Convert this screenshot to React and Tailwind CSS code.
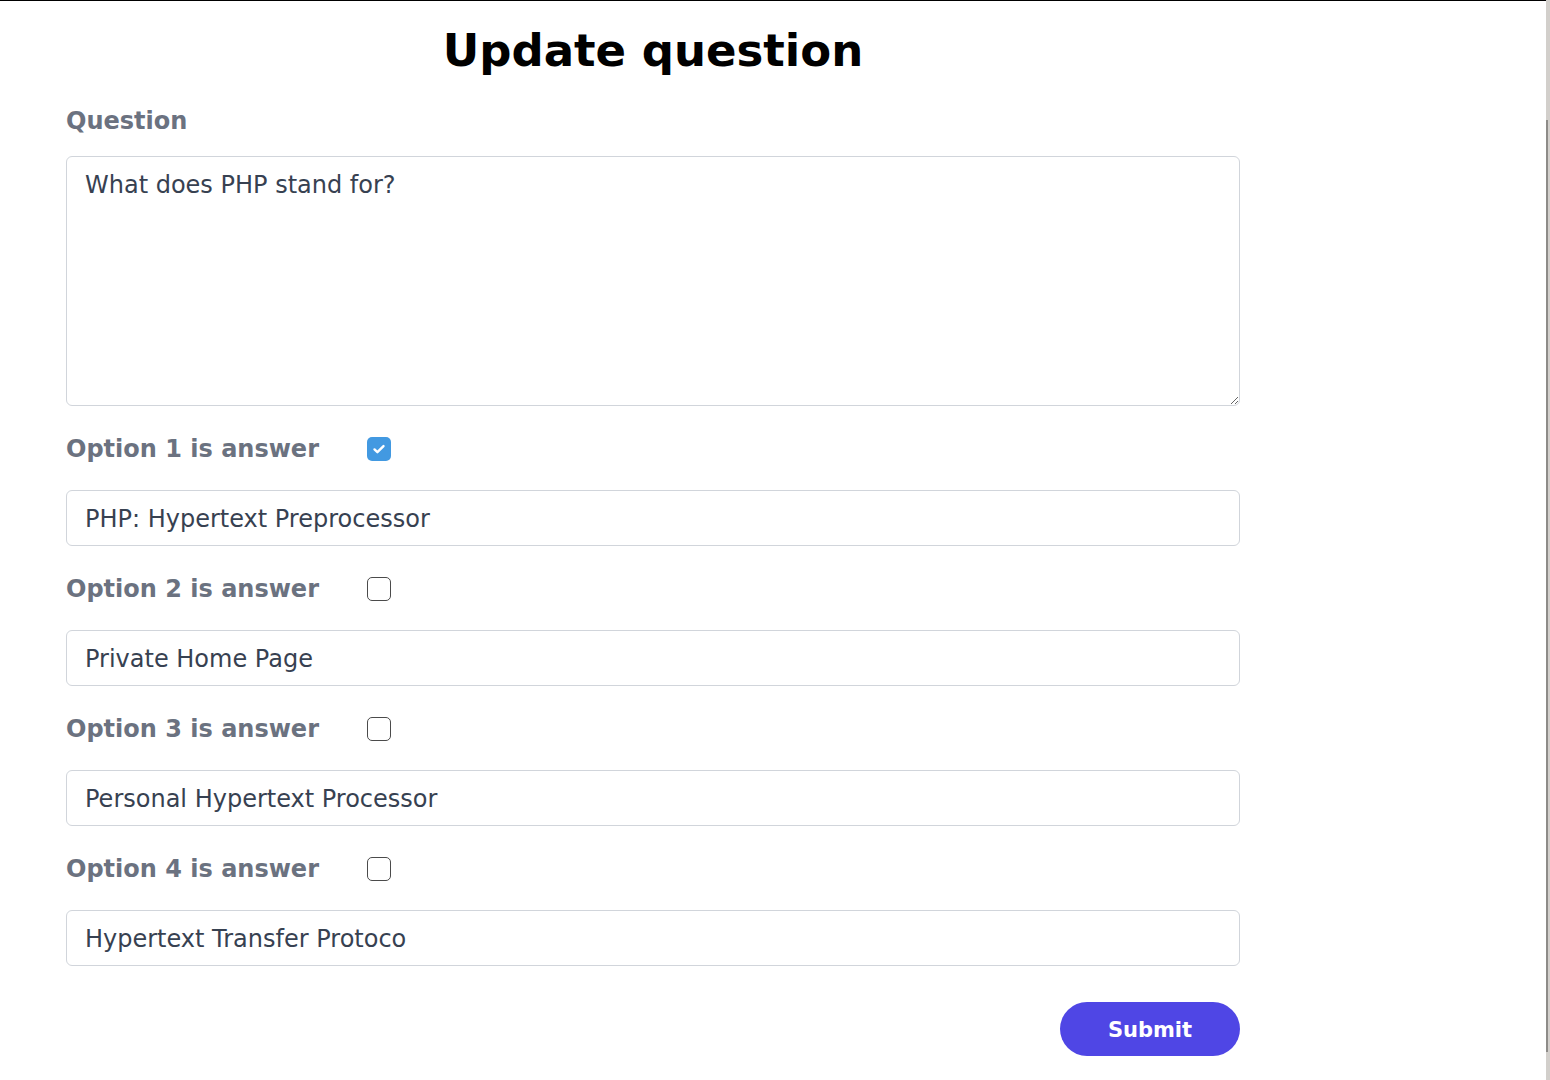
import { useState } from "react";

const options = [
  { label: "Option 1 is answer", value: "PHP: Hypertext Preprocessor", answer: true },
  { label: "Option 2 is answer", value: "Private Home Page", answer: false },
  { label: "Option 3 is answer", value: "Personal Hypertext Processor", answer: false },
  { label: "Option 4 is answer", value: "Hypertext Transfer Protoco", answer: false },
];

const Checkbox = ({ checked, onChange }) => (
  <button
    type="button"
    onClick={onChange}
    className={
      checked
        ? "w-6 h-6 rounded-[5px] bg-[#4299e1] flex items-center justify-center"
        : "w-6 h-6 rounded-[5px] border-[1.5px] border-[#4b4b4b] bg-white"
    }
  >
    {checked && (
      <svg viewBox="0 0 14 14" className="w-[14px] h-[14px]" fill="none">
        <path
          d="M2.5 7.4l2.9 2.8 6.1-6.1"
          stroke="white"
          strokeWidth="2.4"
          strokeLinecap="round"
          strokeLinejoin="round"
        />
      </svg>
    )}
  </button>
);

const App = () => {
  const [answers, setAnswers] = useState(options.map((o) => o.answer));

  const toggle = (i) => {
    setAnswers(answers.map((a, idx) => (idx === i ? !a : a)));
  };

  return (
    <div className="flex min-h-screen bg-white font-['DejaVu_Sans',sans-serif]">
      <div className="flex-1 border-t border-black">
        <form
          className="ml-[66px] w-[1174px] pb-6"
          onSubmit={(e) => e.preventDefault()}
        >
          <h1 className="mt-[27px] text-center text-[45px] leading-none font-bold text-black">
            Update question
          </h1>

          <label className="block mt-[32px] text-2xl leading-8 font-bold text-[#6b7280]">
            Question
          </label>
          <textarea
            defaultValue="What does PHP stand for?"
            className="mt-[19px] block w-full h-[250px] rounded-md border border-[#d1d5db] pl-[18px] pr-4 py-3 text-2xl leading-8 text-[#374151] outline-none"
          />

          {options.map((opt, i) => (
            <div key={i}>
              <div className="mt-[27px] flex items-center h-8">
                <span className="w-[301px] text-2xl leading-8 font-bold text-[#6b7280]">
                  {opt.label}
                </span>
                <Checkbox checked={answers[i]} onChange={() => toggle(i)} />
              </div>
              <input
                type="text"
                defaultValue={opt.value}
                className="mt-[25px] block w-full h-14 rounded-md border border-[#d1d5db] pl-[18px] pr-4 pt-[2px] text-2xl text-[#374151] outline-none"
              />
            </div>
          ))}

          <div className="mt-9 flex justify-end">
            <button
              type="submit"
              className="w-[180px] h-[54px] rounded-full bg-[#4f46e5] pt-1 text-[21px] font-bold text-white"
            >
              Submit
            </button>
          </div>
        </form>
      </div>

      {/* page scrollbar */}
      <div className="w-1 flex bg-[#d2cfcb]">
        <div className="w-[2px] flex flex-col">
          <div className="h-[120px]" />
          <div className="h-[932px] bg-[#8d8b88]" />
        </div>
      </div>
    </div>
  );
};

export default App;
